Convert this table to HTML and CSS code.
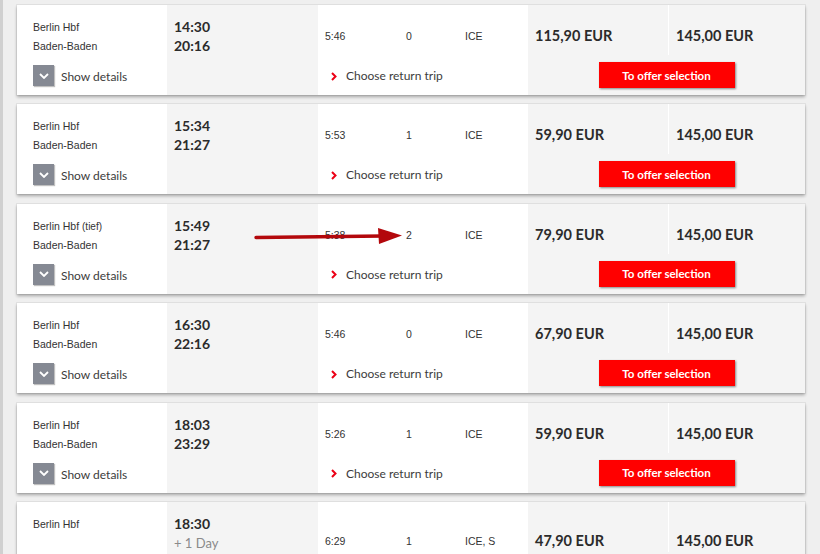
FILE: index.html
```html
<!DOCTYPE html>
<html lang="en">
<head>
<meta charset="utf-8">
<title>Connections</title>
<link rel="stylesheet" href="styles.css">
</head>
<body>
<div class="page">
  <div class="list">

    <div class="card">
      <div class="c-stations">
        <div class="st">Berlin Hbf</div>
        <div class="st">Baden-Baden</div>
        <div class="details"><span class="dbtn"><svg width="10" height="6" viewBox="0 0 10 6"><path d="M1 1 L5 5 L9 1" fill="none" stroke="#fff" stroke-width="1.8"/></svg></span><span class="dtxt">Show details</span></div>
      </div>
      <div class="c-times"><div class="t">14:30</div><div class="t">20:16</div></div>
      <div class="c-info">
        <div class="info-row"><span class="dur">5:46</span><span class="chg">0</span><span class="prod">ICE</span></div>
        <div class="ret"><svg class="chev" width="6" height="9" viewBox="0 0 6 9"><path d="M1 1 L4.5 4.5 L1 8" fill="none" stroke="#ec0016" stroke-width="2"/></svg>Choose return trip</div>
      </div>
      <div class="c-price">
        <div class="prices"><div class="p">115,90 EUR</div><div class="p">145,00 EUR</div></div>
        <div class="btnwrap"><span class="offer">To offer selection</span></div>
      </div>
    </div>

    <div class="card">
      <div class="c-stations">
        <div class="st">Berlin Hbf</div>
        <div class="st">Baden-Baden</div>
        <div class="details"><span class="dbtn"><svg width="10" height="6" viewBox="0 0 10 6"><path d="M1 1 L5 5 L9 1" fill="none" stroke="#fff" stroke-width="1.8"/></svg></span><span class="dtxt">Show details</span></div>
      </div>
      <div class="c-times"><div class="t">15:34</div><div class="t">21:27</div></div>
      <div class="c-info">
        <div class="info-row"><span class="dur">5:53</span><span class="chg">1</span><span class="prod">ICE</span></div>
        <div class="ret"><svg class="chev" width="6" height="9" viewBox="0 0 6 9"><path d="M1 1 L4.5 4.5 L1 8" fill="none" stroke="#ec0016" stroke-width="2"/></svg>Choose return trip</div>
      </div>
      <div class="c-price">
        <div class="prices"><div class="p">59,90 EUR</div><div class="p">145,00 EUR</div></div>
        <div class="btnwrap"><span class="offer">To offer selection</span></div>
      </div>
    </div>

    <div class="card">
      <div class="c-stations">
        <div class="st">Berlin Hbf <span class="sm">(tief)</span></div>
        <div class="st">Baden-Baden</div>
        <div class="details"><span class="dbtn"><svg width="10" height="6" viewBox="0 0 10 6"><path d="M1 1 L5 5 L9 1" fill="none" stroke="#fff" stroke-width="1.8"/></svg></span><span class="dtxt">Show details</span></div>
      </div>
      <div class="c-times"><div class="t">15:49</div><div class="t">21:27</div></div>
      <div class="c-info">
        <div class="info-row"><span class="dur">5:38</span><span class="chg">2</span><span class="prod">ICE</span></div>
        <div class="ret"><svg class="chev" width="6" height="9" viewBox="0 0 6 9"><path d="M1 1 L4.5 4.5 L1 8" fill="none" stroke="#ec0016" stroke-width="2"/></svg>Choose return trip</div>
      </div>
      <div class="c-price">
        <div class="prices"><div class="p">79,90 EUR</div><div class="p">145,00 EUR</div></div>
        <div class="btnwrap"><span class="offer">To offer selection</span></div>
      </div>
    </div>

    <div class="card">
      <div class="c-stations">
        <div class="st">Berlin Hbf</div>
        <div class="st">Baden-Baden</div>
        <div class="details"><span class="dbtn"><svg width="10" height="6" viewBox="0 0 10 6"><path d="M1 1 L5 5 L9 1" fill="none" stroke="#fff" stroke-width="1.8"/></svg></span><span class="dtxt">Show details</span></div>
      </div>
      <div class="c-times"><div class="t">16:30</div><div class="t">22:16</div></div>
      <div class="c-info">
        <div class="info-row"><span class="dur">5:46</span><span class="chg">0</span><span class="prod">ICE</span></div>
        <div class="ret"><svg class="chev" width="6" height="9" viewBox="0 0 6 9"><path d="M1 1 L4.5 4.5 L1 8" fill="none" stroke="#ec0016" stroke-width="2"/></svg>Choose return trip</div>
      </div>
      <div class="c-price">
        <div class="prices"><div class="p">67,90 EUR</div><div class="p">145,00 EUR</div></div>
        <div class="btnwrap"><span class="offer">To offer selection</span></div>
      </div>
    </div>

    <div class="card">
      <div class="c-stations">
        <div class="st">Berlin Hbf</div>
        <div class="st">Baden-Baden</div>
        <div class="details"><span class="dbtn"><svg width="10" height="6" viewBox="0 0 10 6"><path d="M1 1 L5 5 L9 1" fill="none" stroke="#fff" stroke-width="1.8"/></svg></span><span class="dtxt">Show details</span></div>
      </div>
      <div class="c-times"><div class="t">18:03</div><div class="t">23:29</div></div>
      <div class="c-info">
        <div class="info-row"><span class="dur">5:26</span><span class="chg">1</span><span class="prod">ICE</span></div>
        <div class="ret"><svg class="chev" width="6" height="9" viewBox="0 0 6 9"><path d="M1 1 L4.5 4.5 L1 8" fill="none" stroke="#ec0016" stroke-width="2"/></svg>Choose return trip</div>
      </div>
      <div class="c-price">
        <div class="prices"><div class="p">59,90 EUR</div><div class="p">145,00 EUR</div></div>
        <div class="btnwrap"><span class="offer">To offer selection</span></div>
      </div>
    </div>

    <div class="card card-low">
      <div class="c-stations">
        <div class="st">Berlin Hbf</div>
      </div>
      <div class="c-times"><div class="t">18:30</div><div class="day">+ 1 Day</div></div>
      <div class="c-info">
        <div class="info-row"><span class="dur">6:29</span><span class="chg">1</span><span class="prod">ICE, S</span></div>
      </div>
      <div class="c-price">
        <div class="prices"><div class="p">47,90 EUR</div><div class="p">145,00 EUR</div></div>
      </div>
    </div>

  </div>

  <svg class="annot" width="160" height="24" viewBox="0 0 160 24">
    <path d="M3 13.5 L130 12" stroke="#b3080c" stroke-width="3.4" stroke-linecap="round" fill="none"/>
    <path d="M125 4 L149 11.5 L126 20 Z" fill="#b3080c"/>
  </svg>
</div>
</body>
</html>
```

FILE: styles.css
```css
* { box-sizing: border-box; }

html, body {
  margin: 0;
  padding: 0;
}

body {
  background: #efefef;
  font-family: "Liberation Sans", Arial, sans-serif;
  color: #333;
  overflow: hidden;
}

.page {
  position: relative;
  height: 554px;
  border-left: 3px solid #d0d0d0;
  padding: 5px 0 0 14px;
}

.list {
  display: flex;
  flex-direction: column;
  gap: 9.4px;
}

.card {
  display: grid;
  grid-template-columns: 150px 151px 210px 277px;
  width: 788px;
  height: 90px;
  background: #fff;
  box-shadow: 0 0 0 1px rgba(0, 0, 0, 0.05), 0 2px 3px rgba(0, 0, 0, 0.3);
  flex: none;
}

/* stations column */
.c-stations {
  padding: 13px 0 0 16px;
}

.st {
  font-size: 10.5px;
  line-height: 19px;
  height: 19px;
  white-space: nowrap;
}

.st .sm {
  font-size: 10px;
}

.details {
  display: flex;
  align-items: flex-start;
  gap: 7px;
  margin-top: 9px;
  font-family: Lato, "Open Sans", sans-serif;
  font-size: 12px;
  color: #3c3c3c;
}

.dtxt {
  line-height: 18px;
  margin-top: 3px;
}

.dbtn {
  width: 21px;
  height: 21px;
  background: #858993;
  box-shadow: 1px 1px 1px rgba(0, 0, 0, 0.25);
  display: flex;
  align-items: center;
  justify-content: center;
  flex: none;
}

/* times column */
.c-times {
  background: #f4f4f4;
  padding: 12px 0 0 7px;
}

.t {
  font-family: Lato, "Open Sans", sans-serif;
  font-weight: 700;
  font-size: 14px;
  line-height: 19px;
  color: #2b2b2b;
}

.day {
  font-family: Lato, "Open Sans", sans-serif;
  font-size: 13px;
  line-height: 20px;
  color: #8a8a8a;
}

/* info column */
.c-info {
  padding: 24px 0 0 7px;
}

.info-row {
  display: flex;
  font-size: 10.5px;
  line-height: 14px;
  height: 14px;
}

.dur { width: 81px; }
.chg { width: 59px; }

.ret {
  display: flex;
  align-items: center;
  margin-top: 24px;
  padding-left: 6px;
  font-family: Lato, "Open Sans", sans-serif;
  font-size: 12px;
  line-height: 18px;
  color: #3c3c3c;
}

.chev {
  margin-right: 9px;
}

/* price column */
.c-price {
  background: #f4f4f4;
}

.prices {
  display: grid;
  grid-template-columns: 141px 1fr;
  height: 50px;
}

.p {
  padding: 21px 0 0 7px;
  font-family: Lato, "Open Sans", sans-serif;
  font-weight: 700;
  font-size: 14.5px;
  line-height: 20px;
  color: #2b2b2b;
}

.p:first-child {
  border-right: 1px solid #fff;
}

.btnwrap {
  display: flex;
  justify-content: center;
  margin-top: 7px;
}

.offer {
  width: 136px;
  height: 26px;
  background: #ff0000;
  color: #fff;
  font-family: Lato, "Open Sans", sans-serif;
  font-weight: 700;
  font-size: 11.5px;
  display: flex;
  align-items: center;
  justify-content: center;
  box-shadow: 1px 1px 2px rgba(0, 0, 0, 0.45);
}

.card-low .c-info {
  padding-top: 32px;
}

.card-low .p {
  padding-top: 29px;
}

.card-low .c-times {
  padding-top: 12px;
}

/* annotation arrow drawn over the list */
.annot {
  position: absolute;
  left: 250px;
  top: 224px;
}
```
